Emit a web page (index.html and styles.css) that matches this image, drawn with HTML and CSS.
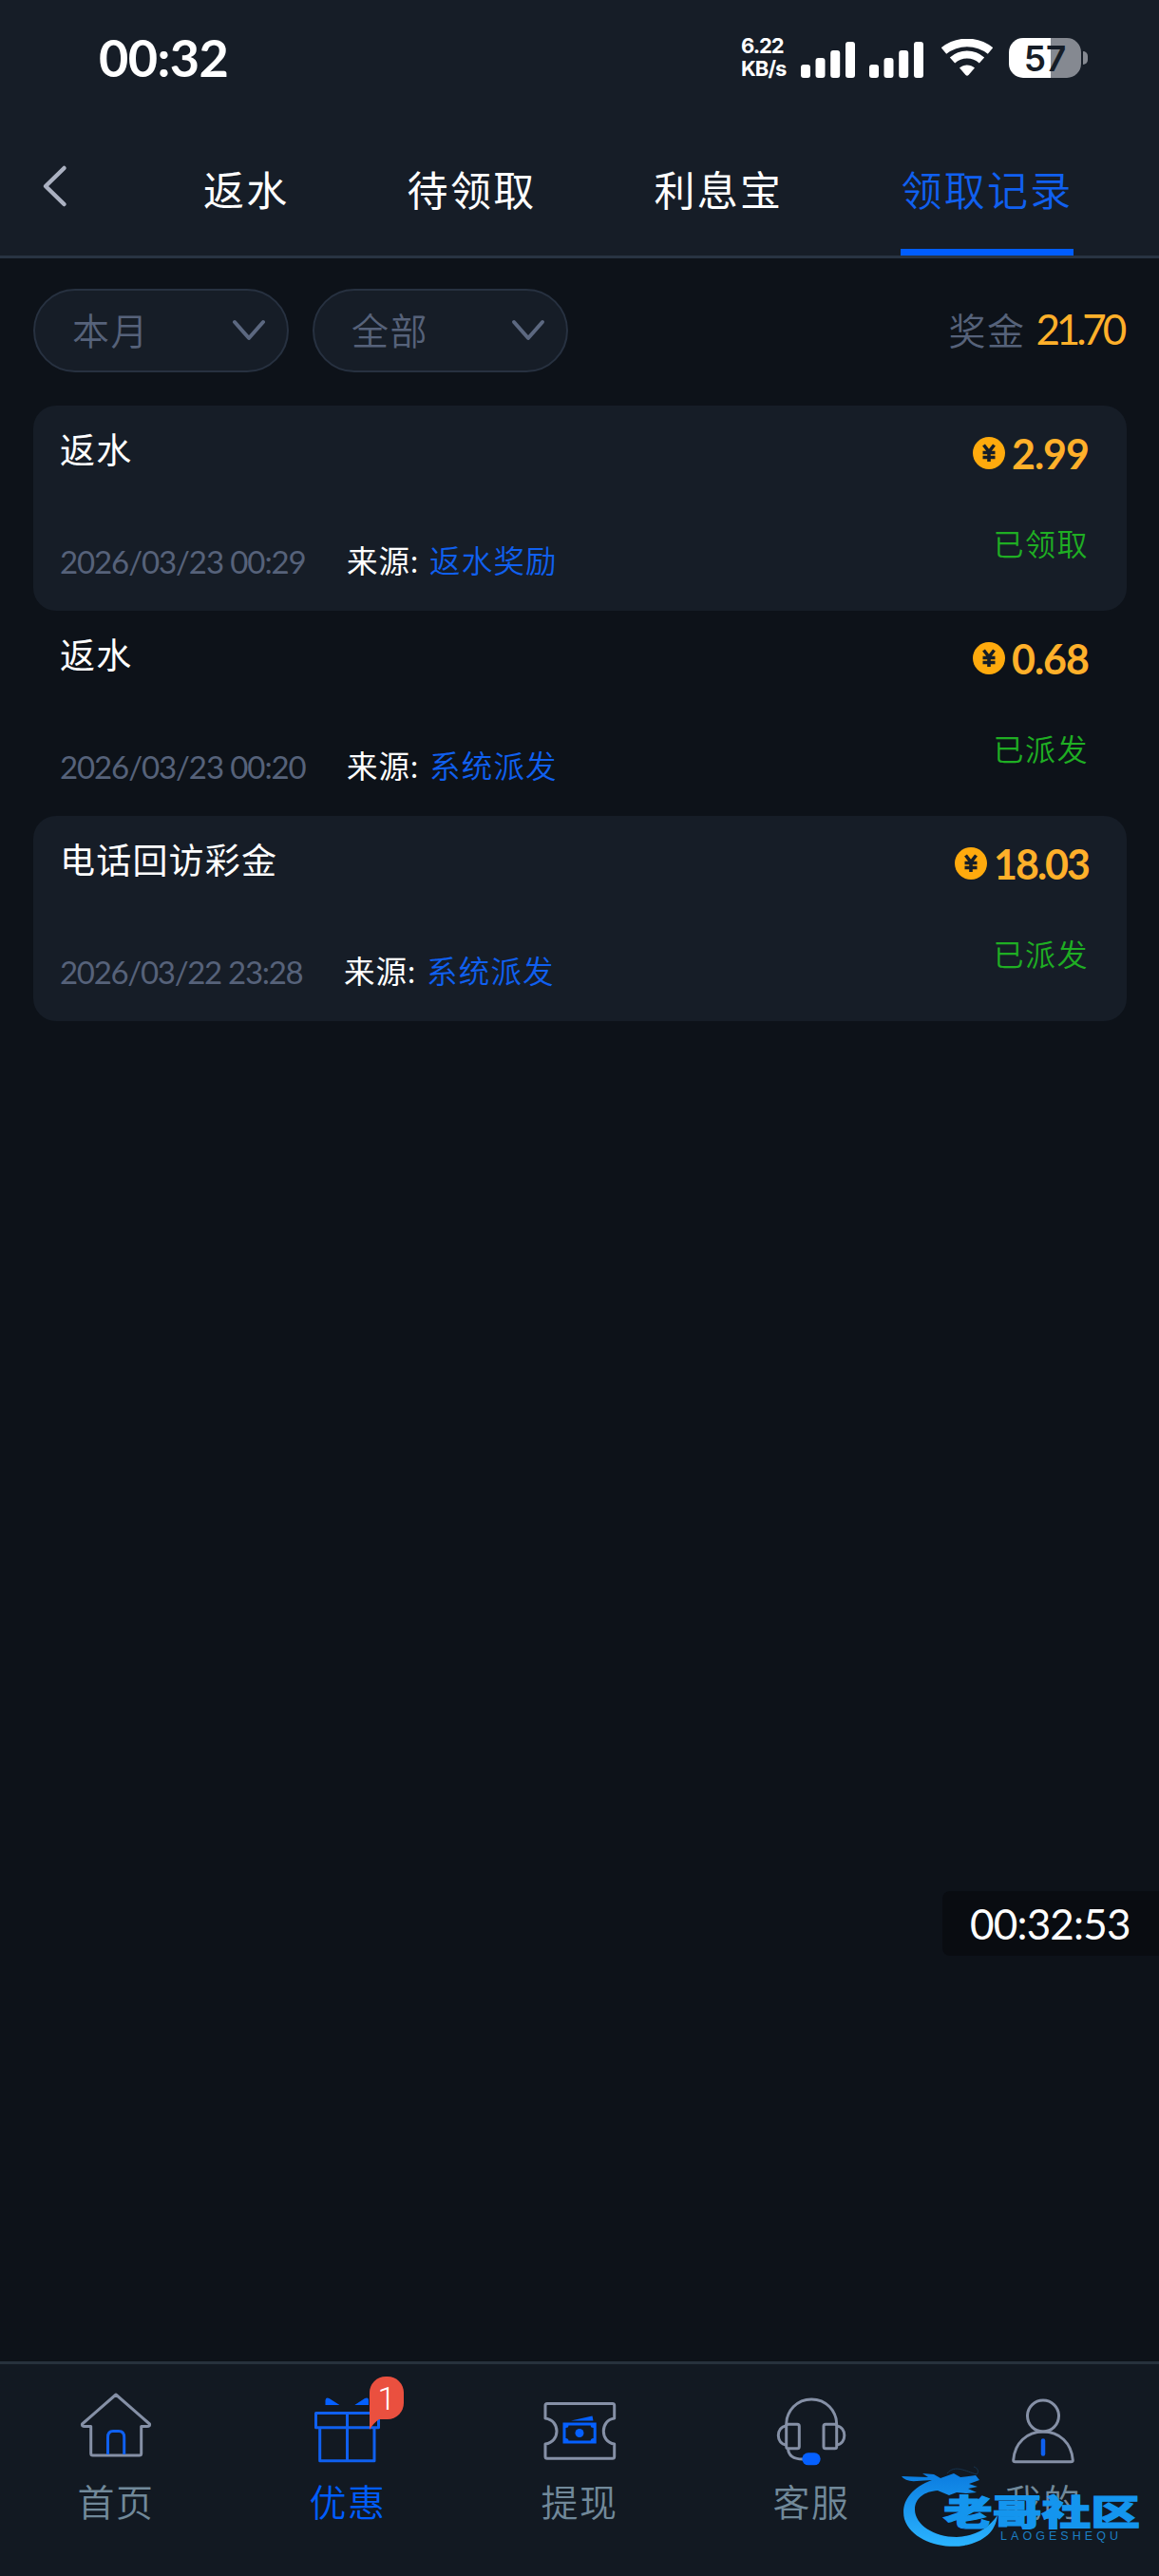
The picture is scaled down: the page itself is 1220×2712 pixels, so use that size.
FILE: index.html
```html
<!DOCTYPE html>
<html lang="zh-CN">
<head>
  <meta charset="UTF-8">
  <title>领取记录</title>
  <link rel="stylesheet" href="styles.css">
</head>
<body>
  <div class="page">
    <header class="header">
      <div class="status-bar">
        <div class="clock">00:32</div>
        <div class="status-right">
          <div class="net-speed"><span>6.22</span><span>KB/s</span></div>
          <svg class="signal" width="58" height="38" viewBox="0 0 58 38" fill="#fff">
            <rect x="0" y="24" width="10" height="14" rx="3"/>
            <rect x="15.5" y="17" width="10" height="21" rx="3"/>
            <rect x="31.2" y="9" width="10" height="29" rx="3"/>
            <rect x="47" y="0" width="10" height="38" rx="3"/>
          </svg>
          <svg class="signal second" width="58" height="38" viewBox="0 0 58 38" fill="#fff">
            <rect x="0" y="24" width="10" height="14" rx="3"/>
            <rect x="15.5" y="17" width="10" height="21" rx="3"/>
            <rect x="31.2" y="9" width="10" height="29" rx="3"/>
            <rect x="47" y="0" width="10" height="38" rx="3"/>
          </svg>
          <svg class="wifi" width="54" height="40" viewBox="0 0 54 40">
            <path d="M2.500 12.500C16.500 1 37.500 1 51.500 12.500" fill="none" stroke="#fff" stroke-width="8.500"/>
            <path d="M11.500 22.500C20.500 14.500 33.500 14.500 42.500 22.500" fill="none" stroke="#fff" stroke-width="8"/>
            <path d="M19 30.500C23.500 26.500 30.500 26.500 35 30.500L28.500 38Q27 39.500 25.500 38Z" fill="#fff"/>
          </svg>
          <div class="battery"><span>57</span></div>
          <div class="battery-tip"></div>
        </div>
      </div>
      <nav class="tabs">
        <svg class="back" width="30" height="46" viewBox="0 0 30 46" fill="none" stroke="#abb1c1" stroke-width="4.500" stroke-linecap="round" stroke-linejoin="round">
          <path d="M24.500 4L5 23L24.500 42"/>
        </svg>
        <a class="tab">返水</a>
        <a class="tab">待领取</a>
        <a class="tab">利息宝</a>
        <a class="tab active">领取记录</a>
      </nav>
    </header>

    <main class="content">
      <div class="filters">
        <div class="select">
          <span>本月</span>
          <svg width="36" height="24" viewBox="0 0 36 24"><path d="M3 3L18 20L33 3"/></svg>
        </div>
        <div class="select">
          <span>全部</span>
          <svg width="36" height="24" viewBox="0 0 36 24"><path d="M3 3L18 20L33 3"/></svg>
        </div>
        <div class="total">奖金<span>21.70</span></div>
      </div>

      <div class="record">
        <div class="record-left">
          <div class="title">返水</div>
          <div class="meta"><span class="date">2026/03/23 00:29</span><span class="source">来源:</span><span class="link">返水奖励</span></div>
        </div>
        <div class="record-right">
          <div class="amount">
            <svg width="34" height="34" viewBox="0 0 34 34"><circle cx="17" cy="17" r="17"/><path d="M11.500 8.500L17 15.500L22.500 8.500M10.500 16.500H23.500M10.500 21.500H23.500M17 15.500V26"/></svg>
            <span>2.99</span>
          </div>
          <div class="state">已领取</div>
        </div>
      </div>

      <div class="record">
        <div class="record-left">
          <div class="title">返水</div>
          <div class="meta"><span class="date">2026/03/23 00:20</span><span class="source">来源:</span><span class="link">系统派发</span></div>
        </div>
        <div class="record-right">
          <div class="amount">
            <svg width="34" height="34" viewBox="0 0 34 34"><circle cx="17" cy="17" r="17"/><path d="M11.500 8.500L17 15.500L22.500 8.500M10.500 16.500H23.500M10.500 21.500H23.500M17 15.500V26"/></svg>
            <span>0.68</span>
          </div>
          <div class="state">已派发</div>
        </div>
      </div>

      <div class="record">
        <div class="record-left">
          <div class="title">电话回访彩金</div>
          <div class="meta"><span class="date narrow">2026/03/22 23:28</span><span class="source">来源:</span><span class="link">系统派发</span></div>
        </div>
        <div class="record-right">
          <div class="amount long">
            <svg width="34" height="34" viewBox="0 0 34 34"><circle cx="17" cy="17" r="17"/><path d="M11.500 8.500L17 15.500L22.500 8.500M10.500 16.500H23.500M10.500 21.500H23.500M17 15.500V26"/></svg>
            <span>18.03</span>
          </div>
          <div class="state">已派发</div>
        </div>
      </div>
    </main>

    <footer class="tabbar">
      <a class="item">
        <svg class="icon" viewBox="0 0 80 80">
          <path d="M40 4L4.500 35Q4 37.500 7 37.500H13.700V66Q13.700 68 15.700 68H64.700Q66.700 68 66.700 66V37.500H73Q76 37.500 75.500 35Z"/>
          <path class="blue" d="M31.500 67V49Q31.500 42.500 37 42.500H43Q48.700 42.500 48.700 49V67"/>
        </svg>
        <span>首页</span>
      </a>
      <a class="item active">
        <svg class="icon" viewBox="0 0 80 80">
          <path class="blue" d="M6.500 23.500H72.500V38.700H6.500ZM10.700 38.700H68V73.700H10.700ZM39.500 23.500V73.700"/>
          <path class="blue-fill" d="M16.500 15V10Q17 6.500 20.500 8L31.500 15ZM47.300 15L58 8Q62 6.500 62 10V15Z"/>
        </svg>
        <span>优惠</span>
        <div class="badge">1<svg width="10" height="14" viewBox="0 0 10 14"><path d="M0 0H10V3Q4 7 0 14Z"/></svg></div>
      </a>
      <a class="item">
        <svg class="icon" viewBox="0 0 80 80">
          <path d="M6 13.500H74.700Q76.700 13.500 76.700 15.500V29C61.500 31 61.500 54 76.700 56V69.300Q76.700 71.300 74.700 71.300H6Q4 71.300 4 69.300V56C20 54 20 31 4 29V15.500Q4 13.500 6 13.500Z"/>
          <path class="blue-fill" fill-rule="evenodd" d="M22.500 33.500H57.700V55.500H22.500ZM28.500 36.500Q28.500 39 25.500 39V50Q28.500 50 28.500 52.500H51.700Q51.700 50 54.700 50V39Q51.700 39 51.700 36.500Z"/>
          <circle class="blue-fill" cx="40" cy="44.500" r="4.500"/>
          <path class="blue-fill" d="M31 31.500L53.500 26.500L54.500 31.500Z"/>
        </svg>
        <span>提现</span>
      </a>
      <a class="item">
        <svg class="icon" viewBox="0 0 80 80">
          <path d="M13.700 37V35.500C13.700 21 25 9 40.200 9S66.700 21 66.700 35.500V37"/>
          <rect x="13.700" y="35.300" width="13.600" height="25.400" rx="2"/>
          <rect x="53" y="35.300" width="13.700" height="25.400" rx="2"/>
          <path d="M13.700 37C2.500 38 2.500 56 13.700 57M66.700 37C77.500 38 77.500 56 66.700 57M15.500 61C16 68 20 72 31 72"/>
          <rect class="blue-fill" x="30.300" y="65.300" width="19.400" height="13" rx="6.500"/>
        </svg>
        <span>客服</span>
      </a>
      <a class="item">
        <svg class="icon" viewBox="0 0 80 80">
          <circle cx="40" cy="26.500" r="16.500"/>
          <path d="M8.700 73Q8.700 74.700 10.700 74.700H69.300Q71.300 74.700 71.300 73C70 55 57 43 40 43S10 55 8.700 73Z"/>
          <path class="blue tie" d="M40 52.500V66.500"/>
        </svg>
        <span>我的</span>
      </a>
      <svg class="watermark" width="260" height="96" viewBox="0 0 260 96">
        <defs>
          <linearGradient id="ring" x1="0" y1="0" x2="0" y2="1">
            <stop offset="0" stop-color="#0b7ce0"/>
            <stop offset="1" stop-color="#2bb4ff"/>
          </linearGradient>
        </defs>
        <path fill="url(#ring)" d="M36 21C12 30 3 46 7 62C14 84 45 94 70 90C90 86 103 76 105 58C95 72 82 80 62 81C38 81 18 68 18 52C18 40 28 33 42 32L54 37L62 34L72 35L83 34L74 30L84 28L75 25L86 21L82 16L66 18L59 14L45 19L38 15L26 14L32 18L4 17Q8 23 20 22Z"/>
        <path fill="none" stroke="#17344f" stroke-width="1" d="M52 14C60 4 72 12 83 15C86 12 84 8 80 7"/>
        <text class="wm-name" x="48" y="68.500" textLength="207" lengthAdjust="spacingAndGlyphs">老哥社区</text>
        <text class="wm-latin" x="108" y="83.500" textLength="124">LAOGESHEQU</text>
      </svg>
    </footer>

    <div class="timer">00:32:53</div>
  </div>
</body>
</html>
```
FILE: styles.css
```css
* {
  box-sizing: border-box;
}
body {
  margin: 0;
  background: #0d1219;
  color: #fff;
  font-family: Lato, "Noto Sans CJK SC", sans-serif;
  font-weight: 350;
}
.page {
  position: relative;
  display: flex;
  flex-direction: column;
  width: 1220px;
  height: 2712px;
}

/* header */
.header {
  height: 272px;
  background: #161d27;
  border-bottom: 3px solid #283442;
}
.status-bar {
  display: flex;
  justify-content: space-between;
  height: 124px;
  padding: 0 75px 0 104px;
}
.clock {
  padding-top: 28px;
  font-size: 54px;
  line-height: 66px;
  font-weight: 700;
  letter-spacing: -0.6px;
}
.status-right {
  display: flex;
  align-items: flex-start;
}
.net-speed {
  display: flex;
  flex-direction: column;
  width: 63px;
  padding-top: 36px;
  font-family: Inter, sans-serif;
  font-size: 22px;
  line-height: 24px;
  font-weight: 700;
  letter-spacing: -1px;
}
.signal {
  margin-top: 44px;
}
.second {
  margin-left: 14px;
}
.wifi {
  margin: 41px 0 0 18px;
}
.battery {
  width: 76px;
  height: 42px;
  margin: 40px 0 0 17px;
  border-radius: 15px;
  background: linear-gradient(to right, #fff 44px, #858991 44px);
  color: #161d27;
  font-family: Inter, sans-serif;
  font-size: 37px;
  line-height: 43px;
  font-weight: 600;
  text-align: center;
}
.battery-tip {
  width: 5px;
  height: 14px;
  margin: 54px 0 0 2px;
  border-radius: 0 5px 5px 0;
  background: #858991;
}
.tabs {
  display: flex;
  height: 145px;
  padding-left: 43px;
}
.back {
  margin: 49px 141px 0 0;
}
.tab {
  height: 145px;
  margin-right: 124px;
  padding-top: 47px;
  font-size: 43px;
  line-height: 60px;
  letter-spacing: 2.3px;
  font-weight: 400;
  white-space: nowrap;
}
.tab.active {
  margin-right: 0;
  border-bottom: 7px solid #005dff;
  color: #1060f0;
  font-weight: 350;
}

/* filters */
.content {
  flex: 1;
  padding: 32px 34px 0 35px;
}
.filters {
  display: flex;
  align-items: center;
  height: 88px;
  margin-bottom: 35px;
}
.select {
  display: flex;
  align-items: center;
  justify-content: space-between;
  width: 269px;
  height: 88px;
  margin-right: 25px;
  padding: 0 22px 5px 39px;
  border: 2px solid #273140;
  border-radius: 44px;
  background: #161d27;
  color: #56627a;
  font-size: 39px;
  letter-spacing: 1.5px;
}
.select svg {
  margin-top: 5px;
  fill: none;
  stroke: #5c6880;
  stroke-width: 4;
  stroke-linecap: round;
  stroke-linejoin: round;
}
.total {
  margin: -4px 4px 0 auto;
  color: #56627a;
  font-size: 39px;
  letter-spacing: 1.5px;
}
.total span {
  margin-left: 11px;
  color: #ffb02a;
  font-size: 44px;
  font-weight: 400;
  letter-spacing: -4.2px;
}

/* records */
.record {
  display: flex;
  justify-content: space-between;
  height: 216px;
  padding: 0 40px 0 28px;
  border-radius: 24px;
}
.record:nth-child(even) {
  background: #161d27;
}
.title {
  height: 136px;
  padding-top: 21px;
  font-size: 37px;
  line-height: 52px;
  letter-spacing: 1.2px;
  font-weight: 400;
}
.meta {
  display: flex;
  font-size: 32.5px;
  line-height: 56px;
  white-space: nowrap;
}
.date {
  width: 302px;
  color: #56627a;
  font-size: 33px;
  letter-spacing: -1.1px;
  font-weight: 400;
}
.narrow {
  width: 299px;
  letter-spacing: -1.3px;
}
.source {
  width: 87px;
  letter-spacing: 1px;
  font-weight: 400;
}
.link {
  color: #1060f0;
  letter-spacing: 1.2px;
}
.record-right {
  display: flex;
  flex-direction: column;
  align-items: flex-end;
}
.amount {
  display: flex;
  align-items: center;
  height: 60px;
  margin-top: 20px;
  color: #ffb02a;
  font-size: 43px;
  font-weight: 700;
  letter-spacing: -1px;
}
.amount.long {
  letter-spacing: -2px;
}
.amount svg {
  margin: 0 7px 0 0;
}
.amount circle {
  fill: #ffaa0d;
}
.amount path {
  fill: none;
  stroke: #161d27;
  stroke-width: 3.6;
}
.state {
  margin-top: 43px;
  color: #1fae23;
  font-size: 32px;
  line-height: 46px;
  letter-spacing: 1.5px;
}

/* bottom bar */
.tabbar {
  position: relative;
  display: flex;
  height: 226px;
  border-top: 3px solid #27323d;
  background: #121922;
}
.item {
  position: relative;
  display: flex;
  flex: 1;
  flex-direction: column;
  align-items: center;
  padding-top: 28px;
  color: #71899a;
  font-size: 39px;
  line-height: 56px;
  letter-spacing: 1.5px;
}
.item span {
  margin-top: 9px;
}
.item.active {
  color: #005dff;
}
.icon {
  width: 80px;
  height: 80px;
  fill: none;
  stroke: #8590a6;
  stroke-width: 3;
  stroke-linejoin: round;
}
.icon .blue {
  stroke: #0f60f0;
}
.icon .blue-fill {
  fill: #0560ff;
  stroke: none;
}
.icon .tie {
  stroke-width: 4.5;
  stroke-linecap: round;
}
.badge {
  position: absolute;
  top: 13px;
  left: 145px;
  width: 36px;
  height: 45px;
  border-radius: 17px 17px 17px 0;
  background: #ea503f;
  color: #fff;
  font-family: Roboto, sans-serif;
  font-size: 34px;
  line-height: 46px;
  letter-spacing: 0;
  text-align: center;
}
.badge svg {
  position: absolute;
  top: 42px;
  left: 0;
  fill: #ea503f;
}
.watermark {
  position: absolute;
  top: 101px;
  left: 945px;
}
.wm-name {
  fill: #1495ee;
  stroke: #1495ee;
  stroke-width: 1.2;
  font-family: "Noto Sans CJK SC", sans-serif;
  font-size: 37px;
  font-weight: 900;
}
.wm-latin {
  fill: #1c7fc4;
  font-family: "Liberation Sans", sans-serif;
  font-size: 12.5px;
  font-weight: 400;
}

.timer {
  position: absolute;
  top: 1991px;
  right: 0;
  width: 228px;
  height: 68px;
  padding-left: 29px;
  border-radius: 8px 0 0 8px;
  background: #090c11;
  font-size: 44px;
  line-height: 69px;
  font-weight: 400;
  letter-spacing: -0.8px;
}
```
